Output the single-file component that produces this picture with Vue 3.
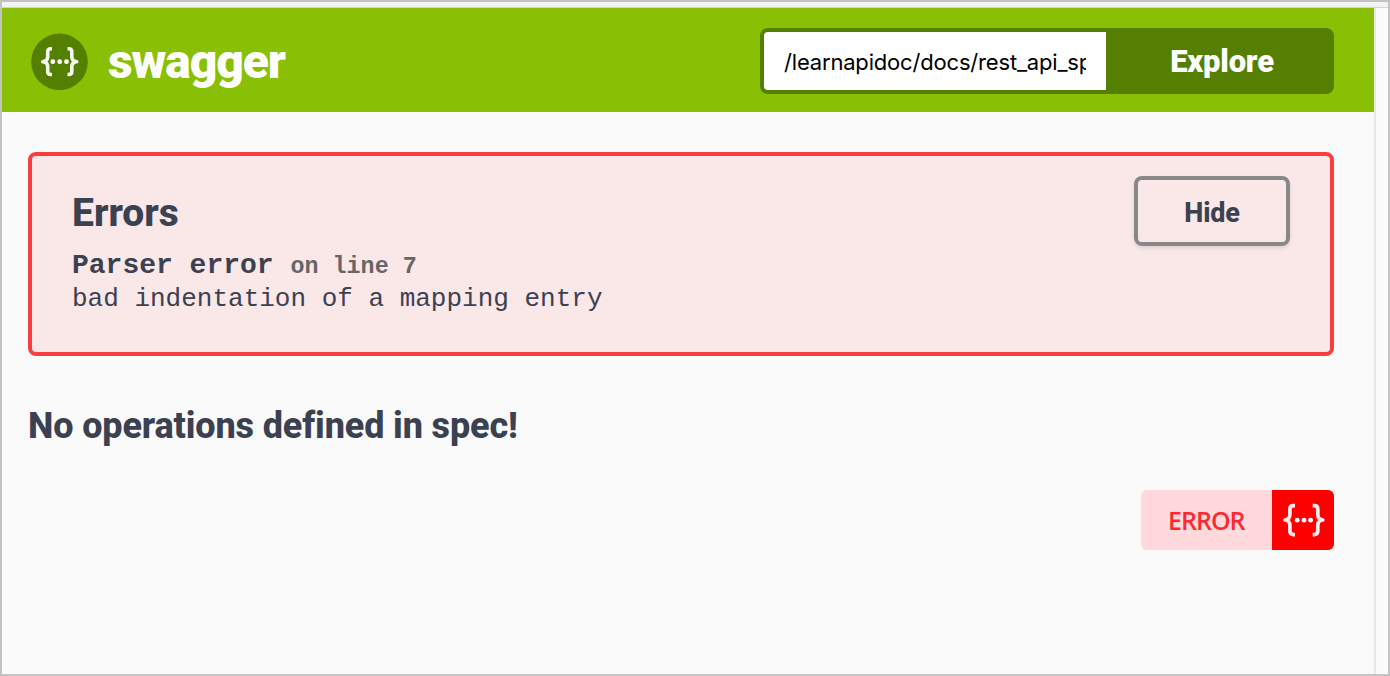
<script setup>
const specUrl = '/learnapidoc/docs/rest_api_sp'
</script>

<template>
  <div class="window">
    <div class="chrome"></div>
    <div class="viewport">
      <main class="page">
        <header class="topbar">
          <a class="brand">
            <svg class="logo" width="57" height="57" viewBox="0 0 57 57">
              <circle cx="28.5" cy="28.8" r="28.3" fill="#547f00" />
              <g fill="none" stroke="#fff" stroke-width="3.6" stroke-linejoin="round" stroke-opacity="0.95">
                <path d="M21 15.8h-1.3q-3 0-3 3v5.2q0 4-5 4.7q5 .6 5 4.6v5.2q0 3 3 3H21" />
                <path d="M36.5 15.8h1.3q3 0 3 3v5.2q0 4 5 4.7q-5 .6-5 4.6v5.2q0 3-3 3h-1.3" />
              </g>
              <g fill="#fff">
                <circle cx="21.8" cy="28.7" r="2.4" />
                <circle cx="28.7" cy="28.7" r="2.4" />
                <circle cx="35.5" cy="28.7" r="2.4" />
              </g>
            </svg>
            <span class="name">swagger</span>
          </a>
          <form class="search">
            <div class="field"><span class="url">{{ specUrl }}</span></div>
            <button type="button" class="explore"><span>Explore</span></button>
          </form>
        </header>
        <section class="errors">
          <div class="details">
            <h4 class="title"><span>Errors</span></h4>
            <div class="parser">Parser error <small>on line 7</small></div>
            <div class="message">bad indentation of a mapping entry</div>
          </div>
          <button type="button" class="hide"><span>Hide</span></button>
        </section>
        <h3 class="empty"><span>No operations defined in spec!</span></h3>
        <div class="badge-row">
          <div class="badge">
            <span class="label">ERROR</span>
            <span class="mark">
              <svg width="62" height="60" viewBox="0 0 62 60">
                <g fill="none" stroke="#fff" stroke-width="3.7" stroke-linejoin="round" stroke-opacity="0.92">
                  <path d="M23 15.7h-1.5q-3.6 0-3.6 3.6v5.2q0 5-4.9 5.5q4.9.5 4.9 5.5v5.5q0 3.6 3.6 3.6H23" />
                  <path d="M40.7 15.7h1.5q3.6 0 3.6 3.6v5.2q0 5 4.9 5.5q-4.9.5-4.9 5.5v5.5q0 3.6-3.6 3.6h-1.5" />
                </g>
                <g fill="#fff">
                  <circle cx="25.2" cy="30.2" r="2.4" />
                  <circle cx="32" cy="30.2" r="2.4" />
                  <circle cx="38.6" cy="30.2" r="2.4" />
                </g>
              </svg>
            </span>
          </div>
        </div>
      </main>
      <div class="gutter"></div>
    </div>
  </div>
</template>

<style>
body {
  margin: 0;
  overflow: hidden;
}
</style>

<style scoped>
.window {
  box-sizing: border-box;
  width: 1390px;
  height: 676px;
  display: flex;
  flex-direction: column;
  border: 2px solid #c3c3c3;
  background: #fafafa;
  color: #3b4151;
  font-family: Roboto, "Liberation Sans", sans-serif;
}
.chrome {
  box-sizing: border-box;
  flex: none;
  height: 6px;
  background: #f3f3f3;
  border-bottom: 1px solid #d4d4d4;
}
.viewport {
  flex: 1;
  display: flex;
}
.page {
  width: 1372px;
}
.gutter {
  flex: 1;
  border-left: 2px solid #e8e8e8;
}
.topbar {
  box-sizing: border-box;
  height: 104px;
  padding: 20px 40px 18px 29px;
  display: flex;
  justify-content: space-between;
  background: #89bf04;
}
.brand {
  display: flex;
  align-items: center;
  gap: 20px;
  color: #fff;
}
.name {
  padding-top: 2px;
  font-size: 48px;
  line-height: 60px;
  font-weight: 900;
  letter-spacing: -1.1px;
}
.search {
  width: 574px;
  height: 66px;
  display: flex;
}
.field {
  box-sizing: border-box;
  width: 346px;
  padding: 0 20px;
  border: 4px solid #547f00;
  border-right: 0;
  border-radius: 8px 0 0 8px;
  background: #fff;
}
.url {
  display: block;
  overflow: hidden;
  white-space: nowrap;
  font: 22px/60px Inter, sans-serif;
  letter-spacing: -0.18px;
  color: #000;
}
.explore {
  flex: 1;
  padding: 2px 0 0 4px;
  border: 0;
  border-radius: 0 8px 8px 0;
  background: #547f00;
  color: #fff;
  font: 900 31px/64px Roboto, sans-serif;
  letter-spacing: -0.2px;
}
.errors {
  box-sizing: border-box;
  height: 204px;
  margin: 40px 40px 0 26px;
  padding: 20px 40px;
  display: flex;
  justify-content: space-between;
  align-items: flex-start;
  border: 4px solid #f93e3e;
  border-radius: 8px;
  background: #fae7e7;
}
.title {
  margin: 13px 0 0;
  font-size: 39px;
  line-height: 48px;
  font-weight: 800;
}
.parser {
  margin-top: 12px;
  font: bold 28px/34px "Liberation Mono", monospace;
}
.parser small {
  font-size: 23.4px;
  color: #666;
}
.message {
  font: 26px/30px "Liberation Mono", monospace;
}
.hide {
  box-sizing: border-box;
  width: 156px;
  height: 70px;
  padding: 4px 0 0;
  border: 4px solid #888;
  border-radius: 8px;
  background: transparent;
  box-shadow: 0 2px 4px rgba(0, 0, 0, 0.1);
  color: #3b4151;
  font: 800 27px/58px Roboto, sans-serif;
  letter-spacing: -0.2px;
}
.empty {
  margin: 45px 26px 0;
  font-size: 36px;
  line-height: 50px;
  font-weight: 800;
  letter-spacing: -0.14px;
  white-space: nowrap;
}
.badge-row {
  display: flex;
  justify-content: flex-end;
  margin: 39px 40px 0 0;
}
.badge {
  display: flex;
  width: 193px;
  height: 60px;
  border-radius: 6px;
  overflow: hidden;
  background: #ffd9dc;
}
.label {
  width: 131px;
  box-sizing: border-box;
  padding-left: 27px;
  font: 650 25px/61px "Open Sans", sans-serif;
  letter-spacing: -1px;
  color: #ff2830;
}
.mark {
  width: 62px;
  background: #f00;
}
</style>
